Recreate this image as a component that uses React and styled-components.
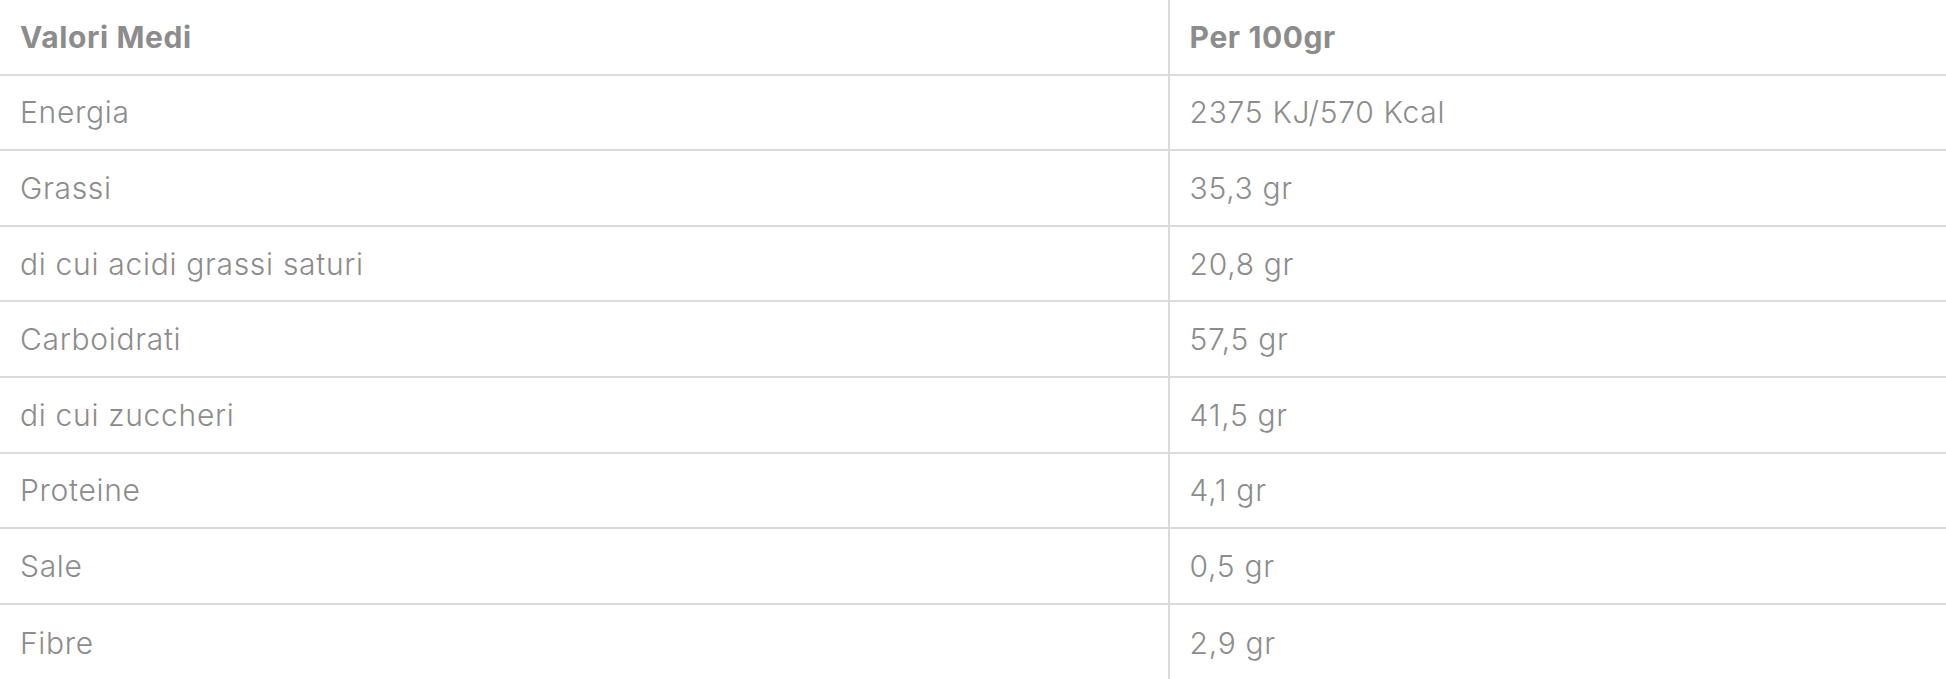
import React from "react";
import styled, { createGlobalStyle } from "styled-components";

const Global = createGlobalStyle`
  html, body { margin: 0; padding: 0; background: #ffffff; }
  body { font-family: Inter, "Noto Sans", Arial, sans-serif; }
`;

const Table = styled.div`
  display: grid;
  grid-template-columns: 60% 40%;
  width: 1946px;
  background: #ffffff;
`;

const Cell = styled.div`
  box-sizing: border-box;
  height: 75.6px;
  display: flex;
  align-items: center;
  padding: 0 20px 0 20px;
  border-bottom: ${(p) => (p.$last ? "none" : "2px solid #dadada")};
  border-left: ${(p) => (p.$right ? "2px solid #dadada" : "none")};
  color: #8c8c8c;
  font-size: 30px;
  font-weight: ${(p) => (p.$head ? 700 : 300)};
  letter-spacing: ${(p) => (p.$head ? "0.6px" : "0.7px")};
  white-space: nowrap;
`;

const rows = [
  ["Energia", "2375 KJ/570 Kcal"],
  ["Grassi", "35,3 gr"],
  ["di cui acidi grassi saturi", "20,8 gr"],
  ["Carboidrati", "57,5 gr"],
  ["di cui zuccheri", "41,5 gr"],
  ["Proteine", "4,1 gr"],
  ["Sale", "0,5 gr"],
  ["Fibre", "2,9 gr"],
];

export default function App() {
  return (
    <>
      <Global />
      <Table>
        <Cell $head>Valori Medi</Cell>
        <Cell $head $right>Per 100gr</Cell>
        {rows.map(([a, b], i) => (
          <React.Fragment key={a}>
            <Cell $last={i === rows.length - 1}>{a}</Cell>
            <Cell $right $last={i === rows.length - 1}>{b}</Cell>
          </React.Fragment>
        ))}
      </Table>
    </>
  );
}
